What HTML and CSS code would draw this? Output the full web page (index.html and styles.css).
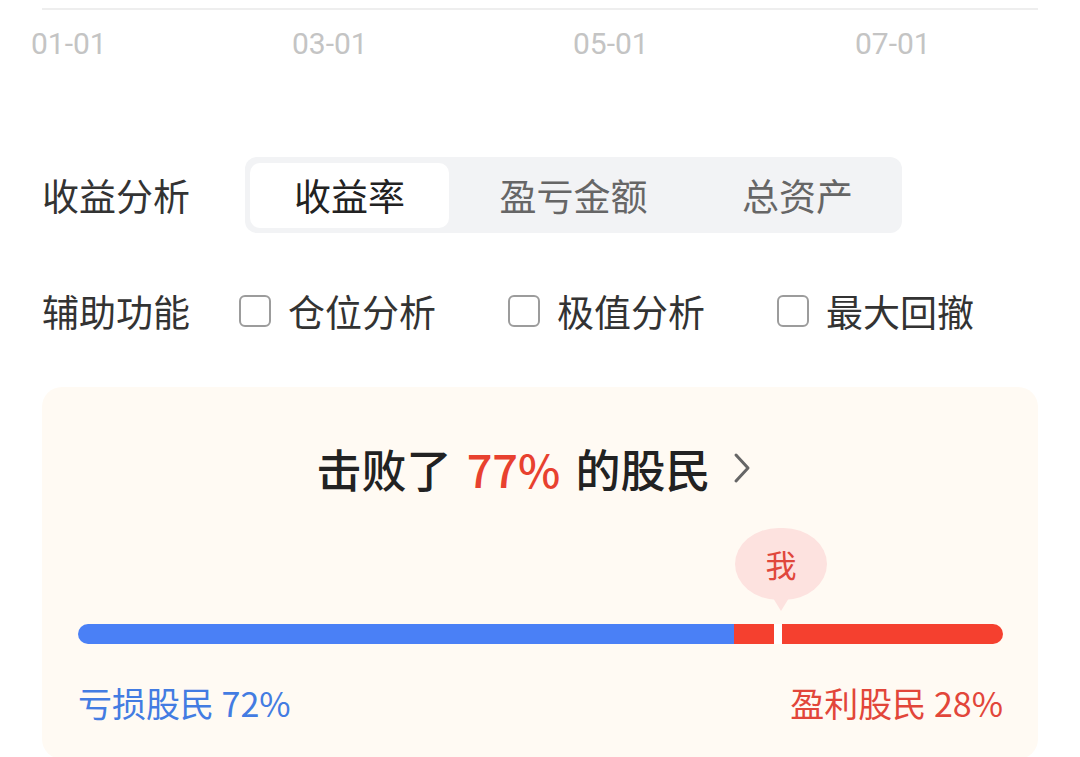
FILE: index.html
```html
<!DOCTYPE html>
<html lang="zh">
<head>
    <meta charset="UTF-8">
    <title>收益分析</title>
    <link rel="stylesheet" href="styles.css">
</head>
<body>
    <div class="page">
        <div class="chart-axis"></div>
        <div class="axis-labels">
            <span>01-01</span>
            <span>03-01</span>
            <span>05-01</span>
            <span>07-01</span>
        </div>

        <div class="row analysis-row">
            <span class="row-label">收益分析</span>
            <div class="segmented">
                <span class="seg-tab active">收益率</span>
                <span class="seg-tab">盈亏金额</span>
                <span class="seg-tab">总资产</span>
            </div>
        </div>

        <div class="row aux-row">
            <span class="row-label">辅助功能</span>
            <label class="check"><span class="check-box"></span>仓位分析</label>
            <label class="check"><span class="check-box"></span>极值分析</label>
            <label class="check"><span class="check-box"></span>最大回撤</label>
        </div>

        <div class="rank-card">
            <div class="rank-title">
                <span class="rank-text">击败了 <span class="rank-pct">77%</span> 的股民</span>
                <svg class="chevron" width="20" height="34" viewBox="0 0 20 34">
                    <path d="M4 4 L16 17 L4 30" fill="none" stroke="#666" stroke-width="3" stroke-linecap="round" stroke-linejoin="round"/>
                </svg>
            </div>

            <div class="marker-area">
                <div class="me-bubble" style="left: 76%">我</div>
            </div>

            <div class="ratio-bar">
                <span class="seg-loss" style="width: 70.9%"></span>
                <span class="seg-gain-pre"></span>
                <span class="seg-divider"></span>
                <span class="seg-gain"></span>
            </div>

            <div class="ratio-labels">
                <span class="loss-text">亏损股民 72%</span>
                <span class="gain-text">盈利股民 28%</span>
            </div>
        </div>
    </div>
</body>
</html>
```

FILE: styles.css
```css
body {
    margin: 0;
    background-color: #fff;
    font-family: "Noto Sans CJK SC", "Noto Sans", sans-serif;
    color: #333;
}
.page {
    padding: 8px 42px 0;
}
.chart-axis {
    height: 2px;
    background-color: #eeeeee;
}
.axis-labels {
    display: grid;
    grid-template-columns: 261px 281px 282px auto;
    margin: 17px 0 0 -11px;
    font-family: Roboto, "Liberation Sans", sans-serif;
    font-size: 30px;
    line-height: 34px;
    color: #c4c4c4;
}
.row {
    display: flex;
    align-items: center;
    white-space: nowrap;
}
.row-label {
    flex-shrink: 0;
    width: 148px;
    font-size: 37px;
    line-height: 44px;
    color: #333;
}
.analysis-row {
    margin-top: 96px;
}
.segmented {
    display: flex;
    gap: 4px;
    margin-left: 55px;
    padding: 6px 5px 5px;
    background-color: #f2f3f5;
    border-radius: 12px;
}
.seg-tab {
    width: 199px;
    height: 65px;
    line-height: 65px;
    text-align: center;
    font-size: 37px;
    color: #666;
    border-radius: 10px;
}
.seg-tab:nth-child(2) {
    width: 241px;
}
.seg-tab.active {
    background-color: #fff;
    color: #222;
}
.aux-row {
    margin-top: 56px;
}
.check {
    display: flex;
    align-items: center;
    flex-shrink: 0;
    margin-right: 72px;
    font-size: 37px;
    line-height: 44px;
    color: #333;
}
.check:last-child {
    margin-right: 0;
}
.aux-row .row-label {
    margin-right: 49px;
}
.check-box {
    flex-shrink: 0;
    width: 28px;
    height: 28px;
    margin-right: 17px;
    border: 2.5px solid #9c9c9c;
    border-radius: 6px;
}
.rank-card {
    margin-top: 54px;
    padding: 51px 35px 34px 36px;
    background-color: #fffaf3;
    border-radius: 20px;
}
.rank-title {
    display: flex;
    align-items: center;
    justify-content: center;
    height: 60px;
    padding-right: 12px;
    font-size: 45px;
    font-weight: 500;
    color: #222;
}
.rank-pct {
    margin: 0 5px;
    color: #e8412f;
}
.chevron {
    margin-left: 22px;
}
.marker-area {
    position: relative;
    height: 84px;
    margin-top: 30px;
}
.me-bubble {
    position: absolute;
    top: 0;
    width: 92px;
    height: 72px;
    margin-left: -46px;
    line-height: 72px;
    text-align: center;
    font-size: 31px;
    color: #e0473b;
    background-color: #fde2df;
    border-radius: 46px / 38px;
}
.me-bubble::after {
    content: "";
    position: absolute;
    left: 38px;
    top: 70px;
    border-left: 8px solid transparent;
    border-right: 8px solid transparent;
    border-top: 13px solid #fde2df;
}
.ratio-bar {
    display: flex;
    height: 20px;
    margin-top: 12px;
    border-radius: 10px;
    overflow: hidden;
}
.seg-loss {
    background-color: #4a80f6;
}
.seg-gain-pre {
    width: 40px;
    background-color: #f5402f;
}
.seg-divider {
    width: 8px;
    background-color: #fff;
}
.seg-gain {
    flex: 1;
    background-color: #f5402f;
}
.ratio-labels {
    display: flex;
    justify-content: space-between;
    margin-top: 37px;
    font-size: 34px;
    line-height: 44px;
}
.loss-text {
    color: #437ce2;
}
.gain-text {
    color: #e2463a;
}
```
